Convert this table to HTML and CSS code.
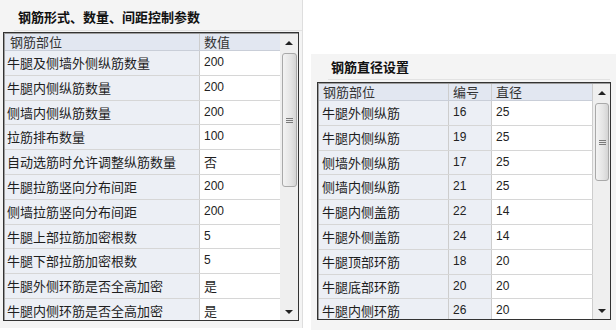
FILE: index.html
```html
<!DOCTYPE html>
<html lang="zh">
<head>
<meta charset="utf-8">
<link rel="stylesheet" href="styles.css">
</head>
<body>
<div class="page">
  <section class="panel panel-left">
    <div class="title">钢筋形式、数量、间距控制参数</div>
    <div class="box box-left">
      <div class="grid">
        <div class="row head"><div class="c lab">钢筋部位</div><div class="c val">数值</div></div>
        <div class="row"><div class="c lab">牛腿及侧墙外侧纵筋数量</div><div class="c val num">200</div></div>
        <div class="row"><div class="c lab">牛腿内侧纵筋数量</div><div class="c val num">200</div></div>
        <div class="row"><div class="c lab">侧墙内侧纵筋数量</div><div class="c val num">200</div></div>
        <div class="row"><div class="c lab">拉筋排布数量</div><div class="c val num">100</div></div>
        <div class="row"><div class="c lab">自动选筋时允许调整纵筋数量</div><div class="c val">否</div></div>
        <div class="row"><div class="c lab">牛腿拉筋竖向分布间距</div><div class="c val num">200</div></div>
        <div class="row"><div class="c lab">侧墙拉筋竖向分布间距</div><div class="c val num">200</div></div>
        <div class="row"><div class="c lab">牛腿上部拉筋加密根数</div><div class="c val num">5</div></div>
        <div class="row"><div class="c lab">牛腿下部拉筋加密根数</div><div class="c val num">5</div></div>
        <div class="row"><div class="c lab">牛腿外侧环筋是否全高加密</div><div class="c val">是</div></div>
        <div class="row"><div class="c lab">牛腿内侧环筋是否全高加密</div><div class="c val">是</div></div>
      </div>
      <div class="scroll scroll-left">
        <div class="arrow up"></div>
        <div class="track"><div class="thumb thumb-left"><span class="grip"></span></div></div>
        <div class="arrow down"></div>
      </div>
    </div>
  </section>
  <section class="panel panel-right">
    <div class="title">钢筋直径设置</div>
    <div class="box box-right">
      <div class="grid">
        <div class="row head"><div class="c lab">钢筋部位</div><div class="c no">编号</div><div class="c val">直径</div></div>
        <div class="row"><div class="c lab">牛腿外侧纵筋</div><div class="c no num">16</div><div class="c val num">25</div></div>
        <div class="row"><div class="c lab">牛腿内侧纵筋</div><div class="c no num">19</div><div class="c val num">25</div></div>
        <div class="row"><div class="c lab">侧墙外侧纵筋</div><div class="c no num">17</div><div class="c val num">25</div></div>
        <div class="row"><div class="c lab">侧墙内侧纵筋</div><div class="c no num">21</div><div class="c val num">25</div></div>
        <div class="row"><div class="c lab">牛腿内侧盖筋</div><div class="c no num">22</div><div class="c val num">14</div></div>
        <div class="row"><div class="c lab">牛腿外侧盖筋</div><div class="c no num">24</div><div class="c val num">14</div></div>
        <div class="row"><div class="c lab">牛腿顶部环筋</div><div class="c no num">18</div><div class="c val num">20</div></div>
        <div class="row"><div class="c lab">牛腿底部环筋</div><div class="c no num">20</div><div class="c val num">20</div></div>
        <div class="row"><div class="c lab">牛腿内侧环筋</div><div class="c no num">26</div><div class="c val num">20</div></div>
      </div>
      <div class="scroll scroll-right">
        <div class="arrow up"></div>
        <div class="track"><div class="thumb thumb-right"><span class="grip"></span></div></div>
        <div class="arrow down"></div>
      </div>
    </div>
  </section>
</div>
</body>
</html>
```
FILE: styles.css
```css
html, body {
  margin: 0;
  padding: 0;
  background: #ffffff;
}
body {
  width: 616px;
  height: 335px;
  overflow: hidden;
  font-family: "Noto Sans CJK SC", "Noto Sans", sans-serif;
  font-size: 13px;
  color: #1e1e1e;
}
.page {
  display: flex;
  align-items: flex-start;
}
.panel {
  background: #f4f4f4;
  box-sizing: border-box;
}
.panel-left {
  width: 303px;
  height: 328px;
  padding-left: 3px;
  border-right: 1px solid #dedede;
}
.panel-right {
  width: 305px;
  height: 276px;
  margin-left: 8px;
  margin-top: 54px;
  padding-left: 6px;
}
.title {
  font-weight: bold;
  color: #111;
  line-height: 22px;
  box-sizing: border-box;
  border-bottom: 1px solid #e2e2e2;
  white-space: nowrap;
}
.panel-left .title {
  height: 31px;
  padding-top: 6px;
  margin-left: 11px;
  padding-left: 4px;
}
.panel-right .title {
  height: 26px;
  padding-top: 2px;
  margin-left: 11px;
  margin-right: 6px;
  padding-left: 3px;
}
.box {
  display: flex;
  box-sizing: border-box;
  border: 1px solid #333;
  background: #fff;
  overflow: hidden;
}
.box-left {
  width: 296px;
  height: 289px;
  margin-top: 1px;
}
.box-right {
  width: 294px;
  height: 238px;
  margin-top: 2px;
}
.grid {
  flex: 1;
  overflow: hidden;
  border-top: 1px solid #9c9c9c;
  border-left: 1px solid #9c9c9c;
}
.row {
  display: flex;
  height: 24.8px;
  box-sizing: border-box;
  border-bottom: 1px solid #d6d6d6;
}
.row.head {
  height: 17px;
  background: #e2e7f1;
  border-bottom: 1px solid #c9ced8;
  color: #333;
}
.c {
  box-sizing: border-box;
  line-height: 23px;
  white-space: nowrap;
}
.head .c {
  line-height: 16px;
}
.lab {
  background: #eceff5;
  border-right: 1px solid #cdcdcd;
  padding-left: 2px;
}
.no {
  background: #eceff5;
  border-right: 1px solid #cdcdcd;
  padding-left: 4px;
  width: 43px;
}
.val {
  flex: 1;
  padding-left: 4px;
}
.head .lab, .head .no {
  background: transparent;
}
.head .lab { padding-left: 5px; }
.num {
  font-family: "Liberation Sans", Arial, sans-serif;
  font-size: 12px;
  color: #222;
}
.box-left .lab { width: 195px; }
.box-right .lab { width: 130px; padding-left: 3px; }
.box-right .head .lab { padding-left: 4px; }
.box-right .val { border-right: 1px solid #cdcdcd; }

.scroll {
  display: flex;
  flex-direction: column;
  background: #efefef;
  border-top: 1px solid #9c9c9c;
}
.scroll-left { width: 18px; }
.scroll-right { width: 17px; }
.arrow {
  height: 17px;
  display: flex;
  align-items: center;
  justify-content: center;
  flex: none;
}
.arrow::after {
  content: "";
  width: 0;
  height: 0;
  border-left: 4px solid transparent;
  border-right: 4px solid transparent;
}
.arrow.up::after {
  border-bottom: 4px solid #222;
}
.arrow.down::after {
  border-top: 4px solid #222;
}
.track {
  flex: 1;
}
.thumb {
  margin: 2px 1px 0 2px;
  box-sizing: border-box;
  border: 1px solid #a9a9a9;
  border-radius: 3px;
  background: linear-gradient(to right, #f3f3f3, #e4e4e4 60%, #d4d4d4);
  display: flex;
  align-items: center;
  justify-content: center;
}
.thumb-left { height: 134px; }
.thumb-right { height: 78px; margin-right: 1px; }
.grip {
  width: 7px;
  height: 5px;
  background: repeating-linear-gradient(to bottom, #7a7a7a 0 1px, transparent 1px 2px);
}
```
